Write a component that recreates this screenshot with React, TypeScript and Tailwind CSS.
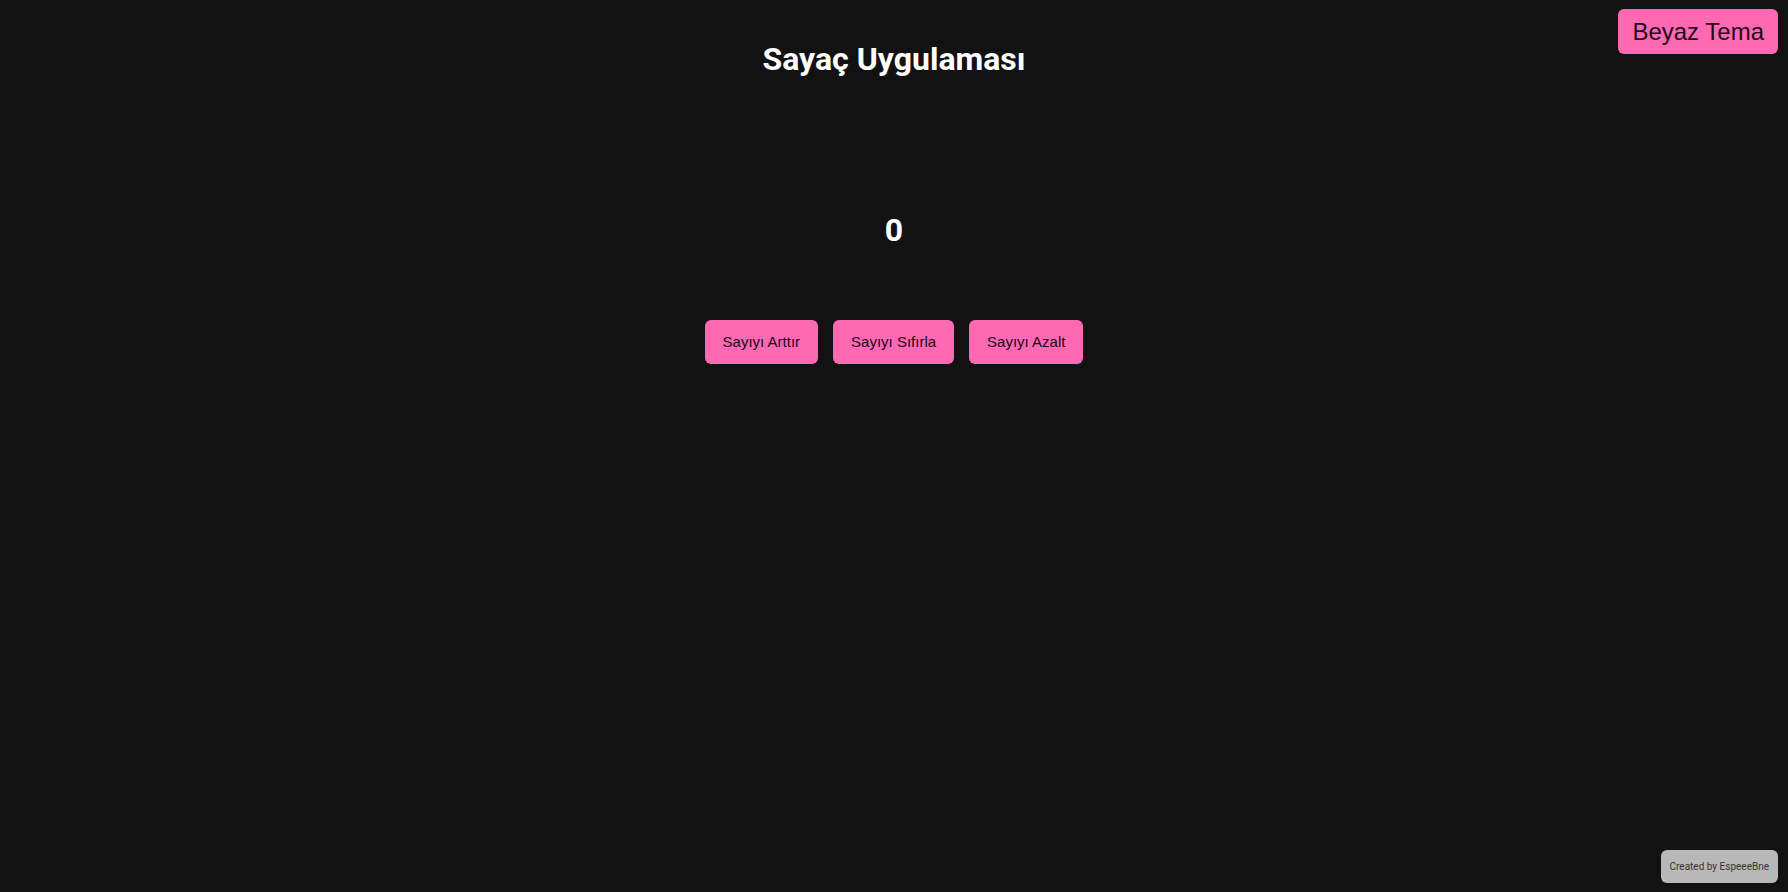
import { useState } from "react";

export default function App() {
  const [count, setCount] = useState(0);
  const [dark, setDark] = useState(true);

  return (
    <div
      className={`relative min-h-screen flex flex-col items-center ${dark ? "bg-[#121212] text-white" : "bg-white text-[#121212]"}`}
      style={{ fontFamily: "Roboto, 'Noto Sans', sans-serif" }}
    >
      <button
        onClick={() => setDark(!dark)}
        className="absolute top-[9px] right-[10px] rounded-md bg-[#ff69b4] px-[14px] py-[8px] text-[24px] leading-[29px] text-[#220818] font-['Liberation_Sans',Arial,sans-serif]"
      >
        {dark ? "Beyaz Tema" : "Siyah Tema"}
      </button>

      <h1 className="mt-[41px] text-[32px] leading-[37px] font-bold">Sayaç Uygulaması</h1>

      <div className="mt-[134px] text-[32px] leading-[37px] font-bold">{count}</div>

      <div className="mt-[71px] flex gap-[15px] font-['Liberation_Sans',Arial,sans-serif]">
        <button
          onClick={() => setCount(count + 1)}
          className="rounded-md bg-[#ff69b4] px-[18px] py-3 text-[15px] leading-[20px] text-[#220818]"
        >
          Sayıyı Arttır
        </button>
        <button
          onClick={() => setCount(0)}
          className="rounded-md bg-[#ff69b4] px-[18px] py-3 text-[15px] leading-[20px] text-[#220818]"
        >
          Sayıyı Sıfırla
        </button>
        <button
          onClick={() => setCount(count - 1)}
          className="rounded-md bg-[#ff69b4] px-[18px] py-3 text-[15px] leading-[20px] text-[#220818]"
        >
          Sayıyı Azalt
        </button>
      </div>

      <div className="absolute bottom-[9px] right-[10px] rounded-md bg-[#b8b8b8] px-[9px] py-[9px] text-[10px] leading-[15px] text-[#333333]">
        Created by EspeeeBne
      </div>
    </div>
  );
}
